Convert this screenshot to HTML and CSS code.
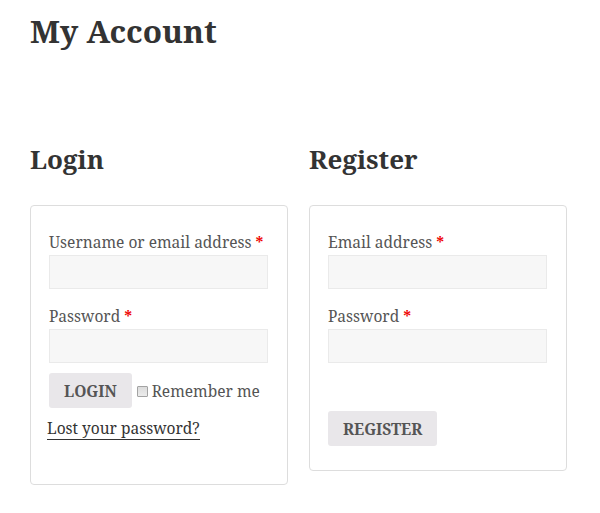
FILE: index.html
```html
<!DOCTYPE html>
<html lang="en">
<head>
<meta charset="utf-8">
<title>My Account</title>
<link rel="stylesheet" href="styles.css">
</head>
<body>
<div class="page">
  <h1 class="page-title">My Account</h1>
  <div class="columns">
    <div class="col">
      <h2 class="col-title">Login</h2>
      <form class="box box-login">
        <p class="field">
          <label class="label">Username or email address <span class="req">*</span></label>
          <input class="input" type="text">
        </p>
        <p class="field">
          <label class="label">Password <span class="req">*</span></label>
          <input class="input" type="password">
        </p>
        <p class="actions">
          <button class="btn" type="button">Login</button>
          <label class="remember"><input class="check" type="checkbox"> Remember me</label>
        </p>
        <p class="lost"><a class="lost-link" href="#">Lost your password?</a></p>
      </form>
    </div>
    <div class="col">
      <h2 class="col-title">Register</h2>
      <form class="box box-register">
        <p class="field">
          <label class="label">Email address <span class="req">*</span></label>
          <input class="input" type="email">
        </p>
        <p class="field">
          <label class="label">Password <span class="req">*</span></label>
          <input class="input" type="password">
        </p>
        <div class="spacer"></div>
        <p class="actions">
          <button class="btn" type="button">Register</button>
        </p>
      </form>
    </div>
  </div>
</div>
</body>
</html>
```
FILE: styles.css
```css
html, body {
  margin: 0;
  padding: 0;
  background: #fff;
}
body {
  font-family: "Noto Serif", "DejaVu Serif", "Liberation Serif", serif;
  color: #333;
}
.page {
  padding: 0 34px 0 30px;
}
.page-title {
  margin: 0;
  padding-top: 10px;
  font-size: 31.5px;
  line-height: 42px;
  font-weight: 700;
  color: #333;
}
.columns {
  display: grid;
  grid-template-columns: 258px 258px;
  column-gap: 21px;
  align-items: start;
  margin-top: 89px;
}
.col-title {
  margin: 0 0 28px;
  font-size: 26px;
  line-height: 36px;
  font-weight: 700;
  color: #333;
}
.box {
  border: 1px solid #ddd;
  border-radius: 4px;
  padding: 24px 19px 44px 18px;
}
.field {
  margin: 0 0 15px;
}
.field + .field {
  margin-bottom: 10px;
}
.label {
  display: block;
  font-size: 15.5px;
  line-height: 24px;
  color: #555;
  margin-bottom: 1px;
}
.req {
  color: #e00;
  font-weight: 700;
}
.input {
  display: block;
  box-sizing: border-box;
  width: 100%;
  height: 34px;
  margin: 0;
  border: 1px solid #eaeaea;
  background: #f7f7f7;
  border-radius: 0;
  padding: 4px 8px;
}
.actions {
  display: flex;
  align-items: center;
  margin: 0;
}
.btn {
  font-family: inherit;
  font-size: 15.5px;
  font-weight: 700;
  text-transform: uppercase;
  color: #555;
  background: #e9e7ea;
  border: 0;
  border-radius: 3px;
  height: 35px;
  padding: 0 15px;
  margin: 0;
}
.remember {
  display: flex;
  align-items: center;
  font-size: 15.5px;
  color: #555;
  margin-left: 4px;
}
.check {
  -webkit-appearance: none;
  appearance: none;
  box-sizing: border-box;
  width: 11px;
  height: 11px;
  margin: 1px 4px 0 1px;
  border: 1px solid #a3a3a3;
  background: linear-gradient(#dcdcdc, #ececec);
  border-radius: 1px;
}
.lost {
  margin: 8px 0 0 -2px;
  font-size: 15.5px;
  line-height: 24px;
}
.lost-link {
  color: #333;
  text-decoration: none;
  border-bottom: 1px solid #333;
}
.spacer {
  height: 38px;
}
.box-register {
  padding-bottom: 24px;
}
```
